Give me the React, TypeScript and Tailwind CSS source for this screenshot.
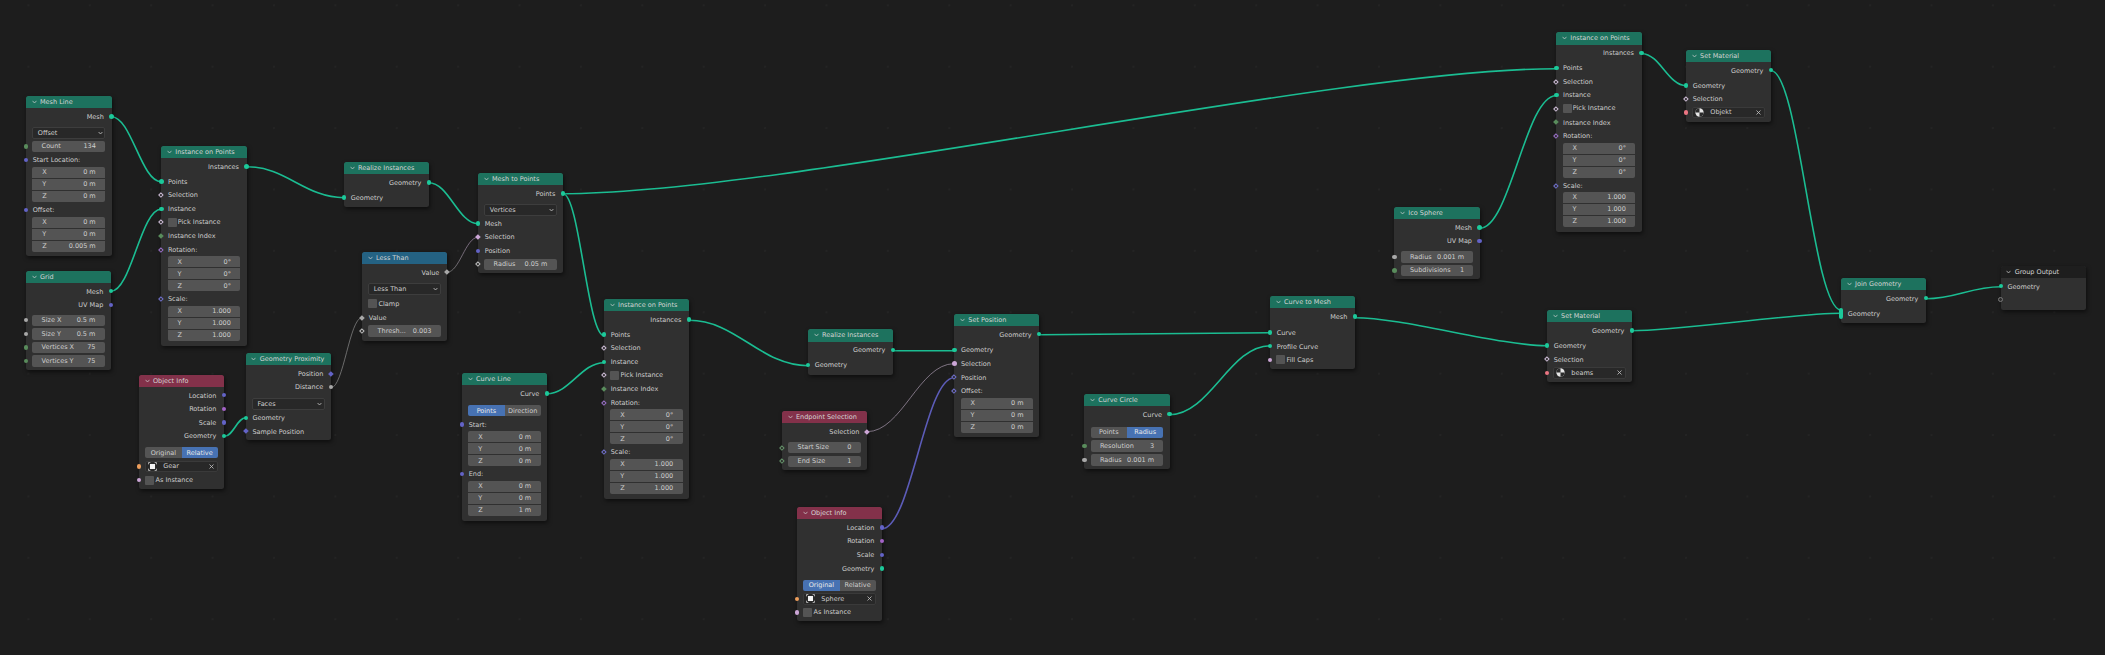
import React from "react";

type T = "geo" | "vec" | "rot" | "bool" | "flt" | "int" | "obj" | "mat";
type Sh = "c" | "d" | "f";

const FILL: Record<T, string> = {
  geo: "bg-[#1cc99a]",
  vec: "bg-[#6363c7]",
  rot: "bg-[#a363c7]",
  bool: "bg-[#cca6d6]",
  flt: "bg-[#a8a8a8]",
  int: "bg-[#598c5c]",
  obj: "bg-[#ed9e5c]",
  mat: "bg-[#eb7582]",
};
const EDGE: Record<T, string> = {
  geo: "border-[#1cc99a]",
  vec: "border-[#7070cc]",
  rot: "border-[#9a70c8]",
  bool: "border-[#cdbcd6]",
  flt: "border-[#bdbdbd]",
  int: "border-[#65926a]",
  obj: "border-[#ed9e5c]",
  mat: "border-[#eb7582]",
};

function Socket({ t, s = "c", right }: { t: T; s?: Sh; right?: boolean }) {
  const pos = right ? "-right-[2.2px]" : "-left-[2.2px]";
  if (s === "c")
    return <span className={`absolute ${pos} top-[4.6px] w-[4.4px] h-[4.4px] rounded-full ${FILL[t]}`} />;
  if (s === "f")
    return <span className={`absolute ${pos} top-[4.9px] w-[3.8px] h-[3.8px] rotate-45 ${FILL[t]}`} />;
  return (
    <span className={`absolute ${pos} top-[4.9px] w-[3.8px] h-[3.8px] rotate-45 border-[0.75px] border-solid bg-[#282828] ${EDGE[t]}`} />
  );
}

function Out({ l, t, s, c = "" }: { l: string; t: T; s?: Sh; c?: string }) {
  return (
    <div className={`relative h-[13.6px] flex items-center justify-end pt-[1px] pr-[7.7px] whitespace-nowrap ${c}`}>
      {l}
      <Socket t={t} s={s} right />
    </div>
  );
}
function In({ l, t, s, c = "" }: { l: string; t: T; s?: Sh; c?: string }) {
  return (
    <div className={`relative h-[13.6px] flex items-center pt-[1px] pl-[6.7px] whitespace-nowrap ${c}`}>
      {l}
      <Socket t={t} s={s} />
    </div>
  );
}
function Check({ l, t, s, c = "" }: { l: string; t?: T; s?: Sh; c?: string }) {
  return (
    <div className={`relative h-[13.6px] flex items-center pl-[6.3px] gap-[1.2px] whitespace-nowrap ${c}`}>
      <span className="w-[9px] h-[9px] rounded-[1px] bg-[#545454]" />
      {l}
      {t && <Socket t={t} s={s} />}
    </div>
  );
}
function Drop({ l, c = "" }: { l: string; c?: string }) {
  return (
    <div className={`h-[13.6px] flex items-center px-[6.3px] ${c}`}>
      <div className="w-full h-[12px] rounded-[2px] bg-[#282828] border border-solid border-[#3d3d3d] flex items-center justify-between pl-[4.5px] pr-[1.5px]">
        {l}
        <svg width="5" height="4" viewBox="0 0 5 4" className="shrink-0">
          <path d="M0.6 1 L2.5 3 L4.4 1" fill="none" stroke="#c8c8c8" strokeWidth="0.8" />
        </svg>
      </div>
    </div>
  );
}
function Num({ l, v, t, s, c = "" }: { l: string; v: string; t?: T; s?: Sh; c?: string }) {
  return (
    <div className={`relative h-[13.6px] flex items-center px-[6.3px] whitespace-nowrap ${c}`}>
      <div className="w-full h-[11.5px] rounded-[2px] bg-[#545454] flex items-center justify-between px-[9.3px]">
        <span>{l}</span>
        <span>{v}</span>
      </div>
      {t && <Socket t={t} s={s} />}
    </div>
  );
}
function Vec({ v, c = "" }: { v: string[]; c?: string }) {
  return (
    <div className={`px-[6.3px] ${c}`}>
      {["X", "Y", "Z"].map((a, i) => (
        <div
          key={a}
          className={`h-[11px] mb-[1px] bg-[#545454] flex items-center justify-between pl-[10px] pr-[9.5px] ${
            i === 0 ? "rounded-t-[2px]" : i === 2 ? "rounded-b-[2px]" : ""
          }`}
        >
          <span>{a}</span>
          <span>{v[i]}</span>
        </div>
      ))}
    </div>
  );
}
function Toggle({ a, b, on, c = "" }: { a: string; b: string; on: 0 | 1; c?: string }) {
  const active = "bg-[#4772b3] text-[#e8e8e8]";
  const idle = "bg-[#545454]";
  return (
    <div className={`h-[13.6px] flex items-center px-[6.3px] ${c}`}>
      <div className="w-full h-[11px] flex rounded-[2px] overflow-hidden">
        <span className={`flex-1 flex items-center justify-center ${on === 0 ? active : idle}`}>{a}</span>
        <span className={`flex-1 flex items-center justify-center ${on === 1 ? active : idle}`}>{b}</span>
      </div>
    </div>
  );
}
function ObjIcon() {
  return (
    <svg width="9" height="9" viewBox="0 0 10 10" className="shrink-0">
      <path d="M0.6 2.6V0.6H2.6M7.4 0.6H9.4V2.6M9.4 7.4V9.4H7.4M2.6 9.4H0.6V7.4" fill="none" stroke="#dcdcdc" strokeWidth="0.8" />
      <rect x="2.2" y="2.2" width="5.6" height="5.6" fill="#f4f4f4" />
    </svg>
  );
}
function MatIcon() {
  return (
    <svg width="9" height="9" viewBox="0 0 10 10" className="shrink-0">
      <circle cx="5" cy="5" r="4.6" fill="#e6e6e6" />
      <path d="M5 0.4A4.6 4.6 0 0 0 0.4 5H5ZM5 5H9.6A4.6 4.6 0 0 1 5 9.6Z" fill="#2a2a2a" />
    </svg>
  );
}
function Field({ l, icon, t, c = "" }: { l: string; icon: React.ReactNode; t: T; c?: string }) {
  return (
    <div className={`relative h-[13.6px] flex items-center px-[6.3px] whitespace-nowrap ${c}`}>
      <div className="w-full h-[11.5px] rounded-[2px] bg-[#282828] border border-solid border-[#3a3a3a] flex items-center pl-[2px] pr-[3px]">
        {icon}
        <span className="ml-[6px] flex-1">{l}</span>
        <svg width="5" height="5" viewBox="0 0 5 5" className="shrink-0">
          <path d="M0.5 0.5L4.5 4.5M4.5 0.5L0.5 4.5" stroke="#c4c4c4" strokeWidth="0.8" fill="none" />
        </svg>
      </div>
      <Socket t={t} />
    </div>
  );
}

function Node({
  pos,
  title,
  head = "bg-[#1d725e]",
  children,
}: {
  pos: string;
  title: string;
  head?: string;
  children: React.ReactNode;
}) {
  return (
    <div className={`absolute ${pos} rounded-[2.5px] bg-[#303030] text-[#cecece] text-[6.5px] leading-none shadow-[1px_2px_4px_rgba(0,0,0,0.55)]`}>
      <div className={`h-[12.3px] rounded-t-[2.5px] flex items-center pl-[5.5px] gap-[3.5px] text-[#d4d4d4] ${head}`}>
        <svg width="5" height="4" viewBox="0 0 5 4" className="shrink-0">
          <path d="M0.5 0.8 L2.5 3 L4.5 0.8" fill="none" stroke="#d4d4d4" strokeWidth="0.7" />
        </svg>
        <span className="whitespace-nowrap">{title}</span>
      </div>
      <div className="pt-[1.5px]">{children}</div>
    </div>
  );
}

const RED = "bg-[#83314a]";
const BLUE = "bg-[#246283]";

function Instance({ pos }: { pos: string }) {
  return (
    <Node pos={pos} title="Instance on Points">
      <Out l="Instances" t="geo" />
      <In c="mt-[1.4px]" l="Points" t="geo" />
      <In l="Selection" t="bool" s="d" />
      <In l="Instance" t="geo" />
      <Check l="Pick Instance" t="bool" s="d" />
      <In l="Instance Index" t="int" s="f" />
      <In l="Rotation:" t="rot" s="d" />
      <Vec v={["0°", "0°", "0°"]} />
      <In l="Scale:" t="vec" s="d" />
      <Vec v={["1.000", "1.000", "1.000"]} />
    </Node>
  );
}

const G = "#1bbd92";
type L = [number, number, number, number];
const GEO: L[] = [
  [111.5, 116.7, 161, 181.7],
  [111, 291.3, 161, 209.3],
  [247, 166.7, 344, 197.7],
  [429, 182.7, 478, 223.7],
  [224.7, 436.3, 245.7, 417.7],
  [563, 193.7, 1556, 68.7],
  [563, 193.7, 604, 335.7],
  [547, 393.7, 604, 362.7],
  [689, 320.3, 808, 365.7],
  [893, 350.7, 954, 350.7],
  [1039.5, 334.7, 1270, 332.7],
  [1169.7, 414.7, 1270, 345.7],
  [1355, 317.7, 1547, 345.7],
  [1632, 330.7, 1841, 313.3],
  [1479.7, 228.3, 1556, 95.7],
  [1642, 53.7, 1686, 85.7],
  [1771, 70.7, 1841, 310],
  [1926, 298.7, 2000.7, 286.7],
];
const d = ([a, b, c, e]: L) => {
  const dx = c - a;
  const h = Math.max(dx * 0.22, Math.min(dx * 0.4, 48));
  return `M${a} ${b}C${a + h} ${b} ${c - h} ${e} ${c} ${e}`;
};

function Links() {
  return (
    <svg width="2105" height="655" viewBox="0 0 2105 655" className="absolute inset-0">
      <defs>
        <linearGradient id="fb" gradientUnits="userSpaceOnUse" x1="447" y1="272" x2="478" y2="237">
          <stop offset="0" stopColor="#8c8c8c" />
          <stop offset="1" stopColor="#a48aac" />
        </linearGradient>
      </defs>
      {GEO.map((l, i) => (
        <path key={i} d={d(l)} fill="none" stroke={G} strokeWidth="1.6" />
      ))}
      <path d={d([882, 528.7, 954, 377.7])} fill="none" stroke="#5c5cb8" strokeWidth="1.6" />
      <path d={d([447, 272.3, 478, 237.3])} fill="none" stroke="url(#fb)" strokeWidth="0.7" />
      <path d={d([331, 387.7, 362, 317.7])} fill="none" stroke="#8c8c8c" strokeWidth="0.7" />
      <path d={d([867, 431.7, 954, 363.7])} fill="none" stroke="#a898ae" strokeWidth="0.7" />
    </svg>
  );
}

export default function App() {
  return (
    <div
      className="relative w-[2105px] h-[655px] overflow-hidden bg-[#1d1d1d] bg-[radial-gradient(circle,#262626_0.6px,transparent_1px)] bg-[size:61.4px_61.4px] bg-[position:-2.3px_-25.4px]"
      style={{ fontFamily: '"DejaVu Sans", sans-serif' }}
    >
      <Links />

      <Node pos="left-[26px] top-[96px] w-[85.5px] h-[160px]" title="Mesh Line">
        <Out l="Mesh" t="geo" />
        <Drop c="mt-[2.8px]" l="Offset" />
        <Num l="Count" v="134" t="int" />
        <In l="Start Location:" t="vec" />
        <Vec v={["0 m", "0 m", "0 m"]} />
        <In l="Offset:" t="vec" c="mt-[0.4px]" />
        <Vec v={["0 m", "0 m", "0.005 m"]} />
      </Node>

      <Node pos="left-[26px] top-[270.7px] w-[85px] h-[99.3px]" title="Grid">
        <Out l="Mesh" t="geo" />
        <Out l="UV Map" t="vec" />
        <Num c="mt-[1.8px]" l="Size X" v="0.5 m" t="flt" />
        <Num l="Size Y" v="0.5 m" t="flt" />
        <Num l="Vertices X" v="75" t="int" />
        <Num l="Vertices Y" v="75" t="int" />
      </Node>

      <Instance pos="left-[161.3px] top-[146px] w-[85.4px] h-[200px]" />

      <Node pos="left-[344px] top-[162px] w-[85px] h-[44.7px]" title="Realize Instances">
        <Out l="Geometry" t="geo" />
        <In c="mt-[1.4px]" l="Geometry" t="geo" />
      </Node>

      <Node pos="left-[478px] top-[173px] w-[85px] h-[100px]" title="Mesh to Points">
        <Out l="Points" t="geo" />
        <Drop c="mt-[2.8px]" l="Vertices" />
        <In l="Mesh" t="geo" />
        <In l="Selection" t="bool" s="f" />
        <In l="Position" t="vec" />
        <Num l="Radius" v="0.05 m" t="flt" s="d" />
      </Node>

      <Node pos="left-[362px] top-[251.7px] w-[85px] h-[89.6px]" title="Less Than" head={BLUE}>
        <Out l="Value" t="flt" s="f" />
        <Drop c="mt-[3.1px]" l="Less Than" />
        <Check c="mt-[1.4px]" l="Clamp" />
        <In l="Value" t="flt" s="f" />
        <Num l="Thresh..." v="0.003" t="flt" s="d" />
      </Node>

      <Node pos="left-[139px] top-[374.7px] w-[85px] h-[114.3px]" title="Object Info" head={RED}>
        <Out l="Location" t="vec" />
        <Out l="Rotation" t="rot" />
        <Out l="Scale" t="vec" />
        <Out l="Geometry" t="geo" />
        <Toggle c="mt-[3.3px]" a="Original" b="Relative" on={1} />
        <Field l="Gear" icon={<ObjIcon />} t="obj" />
        <Check l="As Instance" t="bool" />
      </Node>

      <Node pos="left-[245.7px] top-[353px] w-[85.3px] h-[87px]" title="Geometry Proximity">
        <Out l="Position" t="vec" s="f" />
        <Out l="Distance" t="flt" />
        <Drop c="mt-[3.4px]" l="Faces" />
        <In l="Geometry" t="geo" />
        <In l="Sample Position" t="vec" s="f" />
      </Node>

      <Node pos="left-[462px] top-[373px] w-[85px] h-[148px]" title="Curve Line">
        <Out l="Curve" t="geo" />
        <Toggle c="mt-[3.8px]" a="Points" b="Direction" on={0} />
        <In l="Start:" t="vec" />
        <Vec v={["0 m", "0 m", "0 m"]} />
        <In l="End:" t="vec" />
        <Vec v={["0 m", "0 m", "1 m"]} />
      </Node>

      <Instance pos="left-[604px] top-[299px] w-[85px] h-[200px]" />

      <Node pos="left-[808px] top-[329.3px] w-[85px] h-[45.4px]" title="Realize Instances">
        <Out l="Geometry" t="geo" />
        <In c="mt-[1.4px]" l="Geometry" t="geo" />
      </Node>

      <Node pos="left-[782px] top-[411px] w-[85px] h-[59px]" title="Endpoint Selection" head={RED}>
        <Out l="Selection" t="bool" s="f" />
        <Num c="mt-[2.5px]" l="Start Size" v="0" t="int" s="d" />
        <Num l="End Size" v="1" t="int" s="d" />
      </Node>

      <Node pos="left-[954.3px] top-[313.7px] w-[85px] h-[123px]" title="Set Position">
        <Out l="Geometry" t="geo" />
        <In c="mt-[2.2px]" l="Geometry" t="geo" />
        <In l="Selection" t="bool" />
        <In l="Position" t="vec" s="d" />
        <In l="Offset:" t="vec" s="d" />
        <Vec v={["0 m", "0 m", "0 m"]} />
      </Node>

      <Node pos="left-[797px] top-[507px] w-[85px] h-[114px]" title="Object Info" head={RED}>
        <Out l="Location" t="vec" />
        <Out l="Rotation" t="rot" />
        <Out l="Scale" t="vec" />
        <Out l="Geometry" t="geo" />
        <Toggle c="mt-[3.3px]" a="Original" b="Relative" on={0} />
        <Field l="Sphere" icon={<ObjIcon />} t="obj" />
        <Check l="As Instance" t="bool" />
      </Node>

      <Node pos="left-[1084.3px] top-[393.7px] w-[85.4px] h-[75.3px]" title="Curve Circle">
        <Out l="Curve" t="geo" />
        <Toggle c="mt-[4.7px]" a="Points" b="Radius" on={1} />
        <Num l="Resolution" v="3" t="int" />
        <Num l="Radius" v="0.001 m" t="flt" />
      </Node>

      <Node pos="left-[1270px] top-[296px] w-[85px] h-[72.7px]" title="Curve to Mesh">
        <Out l="Mesh" t="geo" />
        <In c="mt-[2.5px]" l="Curve" t="geo" />
        <In l="Profile Curve" t="geo" />
        <Check l="Fill Caps" t="bool" />
      </Node>

      <Node pos="left-[1394.3px] top-[207px] w-[85.4px] h-[72.3px]" title="Ico Sphere">
        <Out l="Mesh" t="geo" />
        <Out l="UV Map" t="vec" />
        <Num c="mt-[2.2px]" l="Radius" v="0.001 m" t="flt" />
        <Num l="Subdivisions" v="1" t="int" />
      </Node>

      <Node pos="left-[1547px] top-[310px] w-[85px] h-[72px]" title="Set Material">
        <Out l="Geometry" t="geo" />
        <In c="mt-[1.5px]" l="Geometry" t="geo" />
        <In l="Selection" t="bool" s="d" />
        <Field l="beams" icon={<MatIcon />} t="mat" />
      </Node>

      <Instance pos="left-[1556.3px] top-[32.3px] w-[85.4px] h-[199.4px]" />

      <Node pos="left-[1686px] top-[49.7px] w-[85px] h-[72px]" title="Set Material">
        <Out l="Geometry" t="geo" />
        <In c="mt-[1.5px]" l="Geometry" t="geo" />
        <In l="Selection" t="bool" s="d" />
        <Field l="Objekt" icon={<MatIcon />} t="mat" />
      </Node>

      <Node pos="left-[1841px] top-[277.7px] w-[85px] h-[45.3px]" title="Join Geometry">
        <Out l="Geometry" t="geo" />
        <div className="relative h-[13.6px] mt-[1.4px] pt-[1px] flex items-center pl-[6.7px]">
          Geometry
          <span className="absolute -left-[2px] top-[1.3px] w-[4px] h-[11px] rounded-[2px] bg-[#1cc99a]" />
        </div>
      </Node>

      <Node pos="left-[2000.7px] top-[265.7px] w-[85.3px] h-[44px]" title="Group Output" head="bg-[#1e1e1e]">
        <In l="Geometry" t="geo" />
        <div className="relative h-[13.6px]">
          <span className="absolute -left-[2.5px] top-[4.3px] w-[5px] h-[5px] rounded-full border border-solid border-[#7a7a7a] bg-[#2a2a2a]" />
        </div>
      </Node>
    </div>
  );
}
